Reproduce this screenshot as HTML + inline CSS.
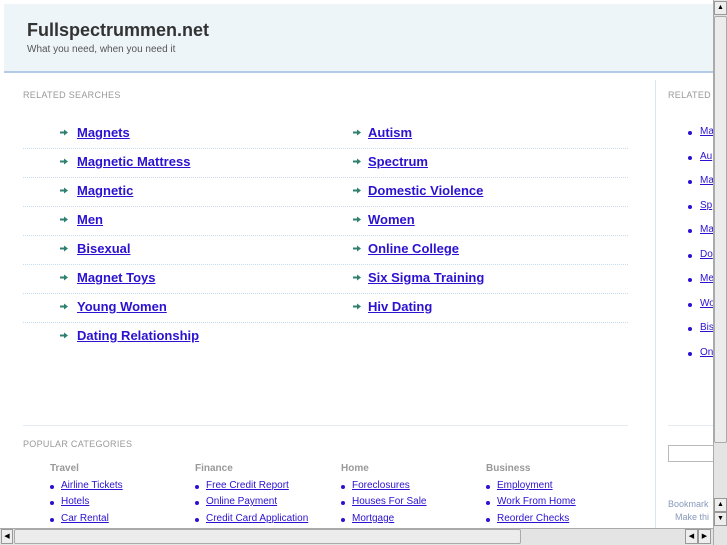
<!DOCTYPE html>
<html><head><meta charset="utf-8"><style>
*{margin:0;padding:0;box-sizing:border-box}
body{width:727px;height:545px;overflow:hidden;background:#fff;font-family:"Liberation Sans",Arial,sans-serif;position:relative}
.a{position:absolute;white-space:nowrap}
#hd{left:4px;top:4px;width:709px;height:69px;background:#eef5f8;border-bottom:2px solid #b4cbe8}
.t{left:27px;top:20px;font-size:18px;font-weight:bold;color:#333}
.st{left:27px;top:44px;font-size:10px;color:#555}
.lab{font-size:9px;color:#999;letter-spacing:0.3px}
.lk{font-size:13px;font-weight:bold;color:#2a12d0;text-decoration:underline}
.ar{width:8px;height:7px}
.sep{height:0;border-top:1px dotted #c8dcf0}
.h{font-size:10px;font-weight:bold;color:#999}
.s{font-size:10px;color:#2a12d0;text-decoration:underline}
.b{width:4px;height:4px;background:#2a12d0;border-radius:50%}
</style></head><body>
<svg width="0" height="0" style="position:absolute"><defs><symbol id="arr" viewBox="0 0 8 7"><rect x="0" y="2.5" width="5" height="2" fill="#2e8070"/><path d="M4 0.5 L8 3.5 L4 6.5Z" fill="#2e8070"/></symbol></defs></svg>
<div class="a" id="hd"></div>
<div class="a t">Fullspectrummen.net</div>
<div class="a st">What you need, when you need it</div>
<div class="a lab" style="left:23px;top:90px">RELATED SEARCHES</div>
<div class="a" style="left:655px;top:80px;width:1px;height:465px;background:#dbe5f0"></div>
<div class="a lab" style="left:668px;top:90px">RELATED</div>

<svg class="a ar" style="left:60px;top:129px"><use href="#arr"/></svg><div class="a lk" style="left:77px;top:125px">Magnets</div>
<svg class="a ar" style="left:353px;top:129px"><use href="#arr"/></svg><div class="a lk" style="left:368px;top:125px">Autism</div>
<div class="a sep" style="left:23px;top:148px;width:605px"></div>
<svg class="a ar" style="left:60px;top:158px"><use href="#arr"/></svg><div class="a lk" style="left:77px;top:154px">Magnetic Mattress</div>
<svg class="a ar" style="left:353px;top:158px"><use href="#arr"/></svg><div class="a lk" style="left:368px;top:154px">Spectrum</div>
<div class="a sep" style="left:23px;top:177px;width:605px"></div>
<svg class="a ar" style="left:60px;top:187px"><use href="#arr"/></svg><div class="a lk" style="left:77px;top:183px">Magnetic</div>
<svg class="a ar" style="left:353px;top:187px"><use href="#arr"/></svg><div class="a lk" style="left:368px;top:183px">Domestic Violence</div>
<div class="a sep" style="left:23px;top:206px;width:605px"></div>
<svg class="a ar" style="left:60px;top:216px"><use href="#arr"/></svg><div class="a lk" style="left:77px;top:212px">Men</div>
<svg class="a ar" style="left:353px;top:216px"><use href="#arr"/></svg><div class="a lk" style="left:368px;top:212px">Women</div>
<div class="a sep" style="left:23px;top:235px;width:605px"></div>
<svg class="a ar" style="left:60px;top:245px"><use href="#arr"/></svg><div class="a lk" style="left:77px;top:241px">Bisexual</div>
<svg class="a ar" style="left:353px;top:245px"><use href="#arr"/></svg><div class="a lk" style="left:368px;top:241px">Online College</div>
<div class="a sep" style="left:23px;top:264px;width:605px"></div>
<svg class="a ar" style="left:60px;top:274px"><use href="#arr"/></svg><div class="a lk" style="left:77px;top:270px">Magnet Toys</div>
<svg class="a ar" style="left:353px;top:274px"><use href="#arr"/></svg><div class="a lk" style="left:368px;top:270px">Six Sigma Training</div>
<div class="a sep" style="left:23px;top:293px;width:605px"></div>
<svg class="a ar" style="left:60px;top:303px"><use href="#arr"/></svg><div class="a lk" style="left:77px;top:299px">Young Women</div>
<svg class="a ar" style="left:353px;top:303px"><use href="#arr"/></svg><div class="a lk" style="left:368px;top:299px">Hiv Dating</div>
<div class="a sep" style="left:23px;top:322px;width:605px"></div>
<svg class="a ar" style="left:60px;top:332px"><use href="#arr"/></svg><div class="a lk" style="left:77px;top:328px">Dating Relationship</div>

<div class="a b" style="left:688px;top:131px"></div><div class="a s" style="left:700px;top:126px">Ma</div>
<div class="a b" style="left:688px;top:156px"></div><div class="a s" style="left:700px;top:151px">Au</div>
<div class="a b" style="left:688px;top:180px"></div><div class="a s" style="left:700px;top:175px">Ma</div>
<div class="a b" style="left:688px;top:205px"></div><div class="a s" style="left:700px;top:200px">Sp</div>
<div class="a b" style="left:688px;top:229px"></div><div class="a s" style="left:700px;top:224px">Ma</div>
<div class="a b" style="left:688px;top:254px"></div><div class="a s" style="left:700px;top:249px">Do</div>
<div class="a b" style="left:688px;top:278px"></div><div class="a s" style="left:700px;top:273px">Me</div>
<div class="a b" style="left:688px;top:303px"></div><div class="a s" style="left:700px;top:298px">Wo</div>
<div class="a b" style="left:688px;top:327px"></div><div class="a s" style="left:700px;top:322px">Bis</div>
<div class="a b" style="left:688px;top:352px"></div><div class="a s" style="left:700px;top:347px">On</div>

<div class="a" style="left:23px;top:425px;width:605px;height:1px;background:#e2eaf3"></div>
<div class="a" style="left:668px;top:425px;width:45px;height:1px;background:#e2eaf3"></div>
<div class="a lab" style="left:23px;top:439px">POPULAR CATEGORIES</div>
<div class="a" style="left:668px;top:445px;width:50px;height:17px;border:1px solid #bbb"></div>
<div class="a" style="left:668px;top:499px;font-size:9px;color:#8899bb">Bookmark</div>
<div class="a" style="left:675px;top:512px;font-size:9px;color:#8899bb">Make thi</div>

<div class="a h" style="left:50px;top:463px">Travel</div>
<div class="a b" style="left:50px;top:485px"></div><div class="a s" style="left:61px;top:480px">Airline Tickets</div>
<div class="a b" style="left:50px;top:501px"></div><div class="a s" style="left:61px;top:496px">Hotels</div>
<div class="a b" style="left:50px;top:518px"></div><div class="a s" style="left:61px;top:513px">Car Rental</div>
<div class="a h" style="left:195px;top:463px">Finance</div>
<div class="a b" style="left:195px;top:485px"></div><div class="a s" style="left:206px;top:480px">Free Credit Report</div>
<div class="a b" style="left:195px;top:501px"></div><div class="a s" style="left:206px;top:496px">Online Payment</div>
<div class="a b" style="left:195px;top:518px"></div><div class="a s" style="left:206px;top:513px">Credit Card Application</div>
<div class="a h" style="left:341px;top:463px">Home</div>
<div class="a b" style="left:341px;top:485px"></div><div class="a s" style="left:352px;top:480px">Foreclosures</div>
<div class="a b" style="left:341px;top:501px"></div><div class="a s" style="left:352px;top:496px">Houses For Sale</div>
<div class="a b" style="left:341px;top:518px"></div><div class="a s" style="left:352px;top:513px">Mortgage</div>
<div class="a h" style="left:486px;top:463px">Business</div>
<div class="a b" style="left:486px;top:485px"></div><div class="a s" style="left:497px;top:480px">Employment</div>
<div class="a b" style="left:486px;top:501px"></div><div class="a s" style="left:497px;top:496px">Work From Home</div>
<div class="a b" style="left:486px;top:518px"></div><div class="a s" style="left:497px;top:513px">Reorder Checks</div>

<div class="a" style="left:713px;top:0;width:14px;height:545px;background:#e4e4e4;border-left:1px solid #aaa"></div>
<div class="a" style="left:714px;top:1px;width:13px;height:14px;background:#eee;border:1px solid #999;font-size:7px;text-align:center;line-height:12px">▲</div>
<div class="a" style="left:714px;top:16px;width:13px;height:427px;background:#ececec;border:1px solid #aaa;border-radius:2px"></div>
<div class="a" style="left:714px;top:498px;width:13px;height:14px;background:#eee;border:1px solid #999;font-size:7px;text-align:center;line-height:12px">▲</div>
<div class="a" style="left:714px;top:512px;width:13px;height:14px;background:#eee;border:1px solid #999;font-size:7px;text-align:center;line-height:12px">▼</div>
<div class="a" style="left:0;top:528px;width:713px;height:17px;background:#e4e4e4;border-top:1px solid #aaa"></div>
<div class="a" style="left:1px;top:529px;width:12px;height:15px;background:#eee;border:1px solid #999;font-size:7px;text-align:center;line-height:13px">◀</div>
<div class="a" style="left:14px;top:529px;width:507px;height:15px;background:#ececec;border:1px solid #aaa;border-radius:2px"></div>
<div class="a" style="left:685px;top:529px;width:13px;height:15px;background:#eee;border:1px solid #999;font-size:7px;text-align:center;line-height:13px">◀</div>
<div class="a" style="left:698px;top:529px;width:13px;height:15px;background:#eee;border:1px solid #999;font-size:7px;text-align:center;line-height:13px">▶</div>
</body></html>
